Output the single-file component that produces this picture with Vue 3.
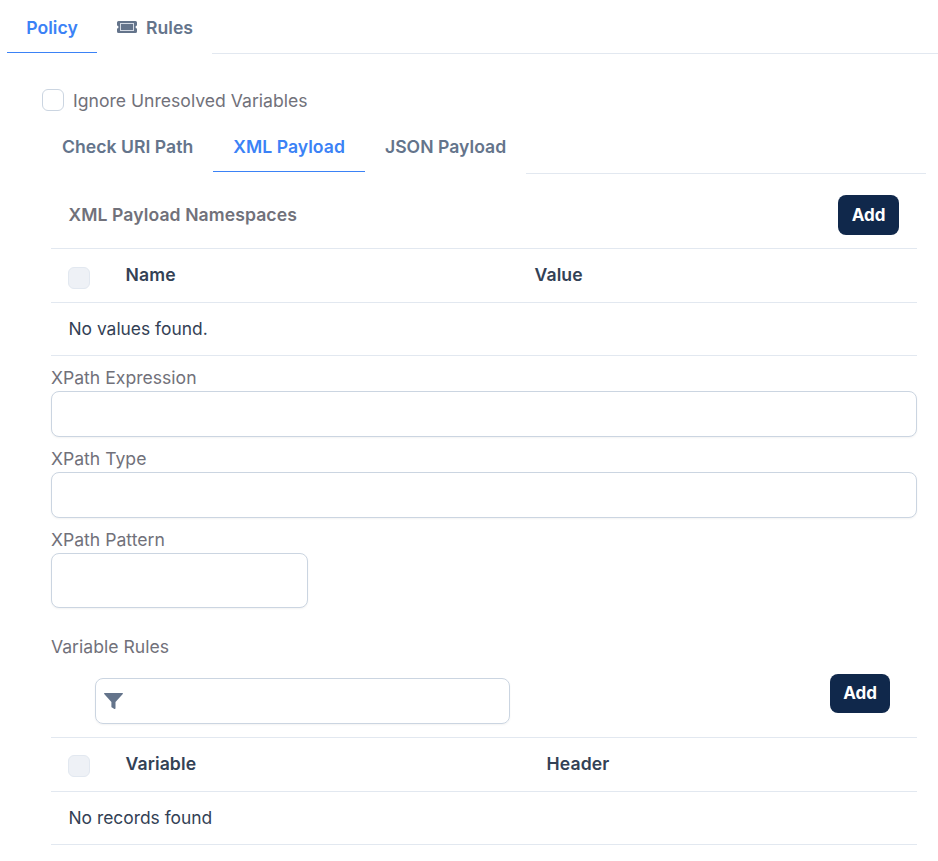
<script setup>
const fields = [
  { label: 'XPath Expression', cls: 'wide' },
  { label: 'XPath Type', cls: 'wide' },
  { label: 'XPath Pattern', cls: 'short' }
]
</script>

<template>
  <div class="page">
    <div class="tabs top-tabs">
      <div class="tab active policy">Policy</div>
      <div class="tab rules">
        <svg class="ticket" width="20" height="12" viewBox="0 0 20 12" aria-hidden="true">
          <path fill="#64748b" d="M1.500 0h17A1.500 1.500 0 0 1 20 1.500v3a1.500 1.500 0 0 0 0 3v3a1.500 1.500 0 0 1-1.500 1.500h-17A1.500 1.500 0 0 1 0 10.500v-3a1.500 1.500 0 0 0 0-3v-3A1.500 1.500 0 0 1 1.500 0Z"/>
          <rect x="3.500" y="2.500" width="13" height="7" fill="#64748b" stroke="#d5dbe5" stroke-width="1"/>
        </svg>
        <span>Rules</span>
      </div>
      <div class="tab-fill"></div>
    </div>

    <div class="policy-body">
      <label class="check-row">
        <span class="box"></span>
        <span class="check-text">Ignore Unresolved Variables</span>
      </label>

      <div class="tabs inner-tabs">
        <div class="tab inner">Check URI Path</div>
        <div class="tab inner active">XML Payload</div>
        <div class="tab inner">JSON Payload</div>
        <div class="tab-fill"></div>
      </div>

      <div class="content">
        <div class="ns-head">
          <span class="ns-title">XML Payload Namespaces</span>
          <button class="add" type="button">Add</button>
        </div>
        <div class="row head">
          <span class="box muted"></span>
          <span class="col-a">Name</span>
          <span class="col-b">Value</span>
        </div>
        <div class="row empty">No values found.</div>

        <div v-for="f in fields" :key="f.label" class="field">
          <div class="label">{{ f.label }}</div>
          <div class="input" :class="f.cls"></div>
        </div>

        <div class="label var-label">Variable Rules</div>
        <div class="var-bar">
          <div class="search">
            <svg width="19" height="16" viewBox="0 0 19 16" aria-hidden="true">
              <path fill="#64748b" d="M0.700 0h17.600c.6 0 .9.600.5 1.100L11.500 9v6.200c0 .6-.6 1-1.100.7L8 14.600c-.4-.2-.6-.5-.6-.9V9L.2 1.100C-.2.600.1 0 .7 0Z"/>
            </svg>
          </div>
          <button class="add" type="button">Add</button>
        </div>
        <div class="row head second">
          <span class="box muted"></span>
          <span class="col-a">Variable</span>
          <span class="col-c">Header</span>
        </div>
        <div class="row empty">No records found</div>
      </div>
    </div>
  </div>
</template>

<style>
html, body { margin: 0; background: #fff; }
</style>

<style scoped>
.page {
  width: 938px;
  height: 861px;
  overflow: hidden;
  box-sizing: border-box;
  padding-left: 7px;
  font-family: Inter, "Liberation Sans", sans-serif;
  font-size: 17.6px;
  color: #334155;
  background: #fff;
}
.tabs { display: flex; }
.tab {
  box-sizing: border-box;
  font-weight: 600;
  color: #64748b;
  display: flex;
  align-items: center;
  justify-content: center;
  letter-spacing: 0.03px;
}
.tab-fill { flex: 1; border-bottom: 1px solid #e2e8f0; }
.top-tabs { height: 54px; }
.policy { width: 90px; height: 53px; padding-top: 2px; }
.rules { width: 115px; gap: 9px; height: 54px; padding-left: 1px; }
.ticket { flex: none; }
.tab.active { color: #3b82f6; border-bottom: 1px solid #3b82f6; }
.policy-body { padding: 35px 12px 0 35px; }
.check-row {
  display: flex;
  align-items: center;
  gap: 9px;
  height: 22px;
  color: #71717a;
  line-height: 22px;
}
.check-text { padding-top: 2px; }
.box {
  flex: none;
  box-sizing: border-box;
  width: 22px;
  height: 22px;
  border: 1px solid #cbd5e1;
  border-radius: 6px;
  background: #fff;
}
.box.muted { background: #eef1f6; border-color: #e2e8f0; margin-top: 6px; }
.second .box.muted { margin-top: 4px; }
.inner-tabs { height: 51px; margin-top: 11px; }
.inner {
  height: 50px;
  padding: 0 20px 1px;
}
.inner-tabs .tab-fill { height: 51px; }
.content { padding: 0 9px; }
.ns-head {
  display: flex;
  align-items: center;
  justify-content: space-between;
  height: 76px;
  padding: 8px 18px 0 17.500px;
  box-sizing: border-box;
  font-weight: 600;
  color: #71717a;
  border-bottom: 1px solid #e2e8f0;
}
.ns-title { letter-spacing: 0.08px; }
.add {
  font: inherit;
  font-size: 17px;
  font-weight: 700;
  color: #fff;
  background: #10284b;
  border: 0;
  border-radius: 8px;
  width: 61px;
  height: 40px;
  padding: 0;
}
.row {
  display: flex;
  align-items: center;
  box-sizing: border-box;
  padding-left: 17px;
  border-bottom: 1px solid #e2e8f0;
}
.row.head { height: 54px; font-weight: 600; padding-bottom: 2px; letter-spacing: 0.12px; }
.row.empty { height: 53px; padding-left: 17.500px; padding-bottom: 2px; font-size: 17.400px; }
.col-a { width: 409px; margin-left: 35.500px; }
.col-c { margin-left: 12px; }
.label { color: #71717a; line-height: 19px; }
.field .label { padding-top: 12px; height: 23px; box-sizing: content-box; line-height: 19px; }
.input {
  box-sizing: border-box;
  border: 1px solid #cbd5e1;
  border-radius: 8px;
  height: 46px;
  background: #fff;
  box-shadow: 0 1px 2px rgba(0, 0, 0, 0.05);
}
.input.short { width: 257px; height: 55px; }
.var-label { margin-top: 29px; padding-bottom: 1px; }
.var-bar {
  display: flex;
  align-items: flex-start;
  justify-content: space-between;
  height: 81px;
  padding: 0 27px 0 44px;
  box-sizing: border-box;
  border-bottom: 1px solid #e2e8f0;
}
.var-bar .add { margin-top: 17px; width: 60px; height: 39px; padding-bottom: 2px; }
.search {
  box-sizing: border-box;
  width: 415px;
  height: 46px;
  margin-top: 21px;
  border: 1px solid #cbd5e1;
  border-radius: 8px;
  display: flex;
  align-items: center;
  padding-left: 8px;
  box-shadow: 0 1px 2px rgba(0, 0, 0, 0.05);
}
</style>
